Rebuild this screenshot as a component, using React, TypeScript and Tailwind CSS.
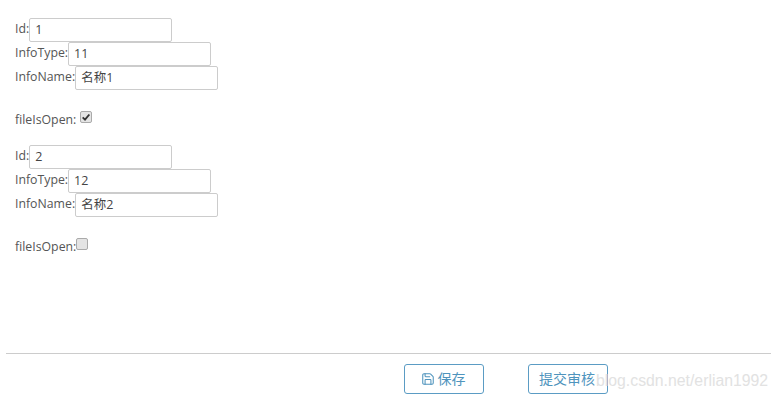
import { Save } from "lucide-react";

const records = [
  { id: "1", type: "11", name: "名称1", open: true },
  { id: "2", type: "12", name: "名称2", open: false },
];

function Field({ label, value }: { label: string; value: string }) {
  return (
    <div className="flex h-6 items-center">
      <span className="-mt-[2px]">{label}</span>
      <div className="flex h-6 w-[143px] items-center rounded-[2px] border border-[#cccccc] bg-white pl-[5px] pt-[1px] text-[12.5px] text-[#444444]">
        {value}
      </div>
    </div>
  );
}

function Record({ id, type, name, open }: { id: string; type: string; name: string; open: boolean }) {
  return (
    <div className="flex flex-col">
      <Field label="Id:" value={id} />
      <Field label="InfoType:" value={type} />
      <Field label="InfoName:" value={name} />
      <div className="mt-[17px] flex h-[24px] items-start">
        <span className="mt-[4px]">{open ? "fileIsOpen: " : "fileIsOpen:"}</span>
        <div className={`mt-[4px] flex h-3 w-3 items-center justify-center rounded-[2px] border border-[#aaaaaa] bg-[#e4e4e4] ${open ? "ml-[4px]" : "ml-0"}`}>
          {open && (
            <svg viewBox="0 0 12 12" className="h-[10px] w-[10px]">
              <path d="M2 6.5 L4.8 9.2 L10 3" fill="none" stroke="#333333" strokeWidth="2.2" />
            </svg>
          )}
        </div>
      </div>
    </div>
  );
}

export default function App() {
  return (
    <div className="relative flex h-[407px] w-[771px] flex-col overflow-hidden bg-white font-['Open_Sans','Noto_Sans_CJK_SC',sans-serif] text-[12.3px] text-[#555555]">
      <div className="flex h-[353px] flex-col gap-[14px] pl-[15px] pt-[18px]">
        {records.map((r) => (
          <Record key={r.id} {...r} />
        ))}
      </div>
      <div className="ml-[6px] h-px bg-[#cccccc]" />
      <div className="flex gap-[44px] pl-[404px] pt-[10px]">
        <button className="flex h-[30px] w-20 items-center justify-center gap-[3px] rounded-[3px] border border-[#5b9cc4] pb-[2px] pr-[2px] text-[14px] text-[#4f94bd]">
          <Save size={14} strokeWidth={1.8} className="mt-[2px]" />
          保存
        </button>
        <button className="flex h-[30px] w-20 items-center justify-center rounded-[3px] border border-[#5b9cc4] pb-[2px] pr-[2px] text-[14px] text-[#4f94bd]">
          提交审核
        </button>
      </div>
      <span className="absolute left-[596px] top-[369px] font-['Liberation_Sans',sans-serif] text-[15.8px] text-[#e2e2e2]">
        blog.csdn.net/erlian1992
      </span>
    </div>
  );
}
